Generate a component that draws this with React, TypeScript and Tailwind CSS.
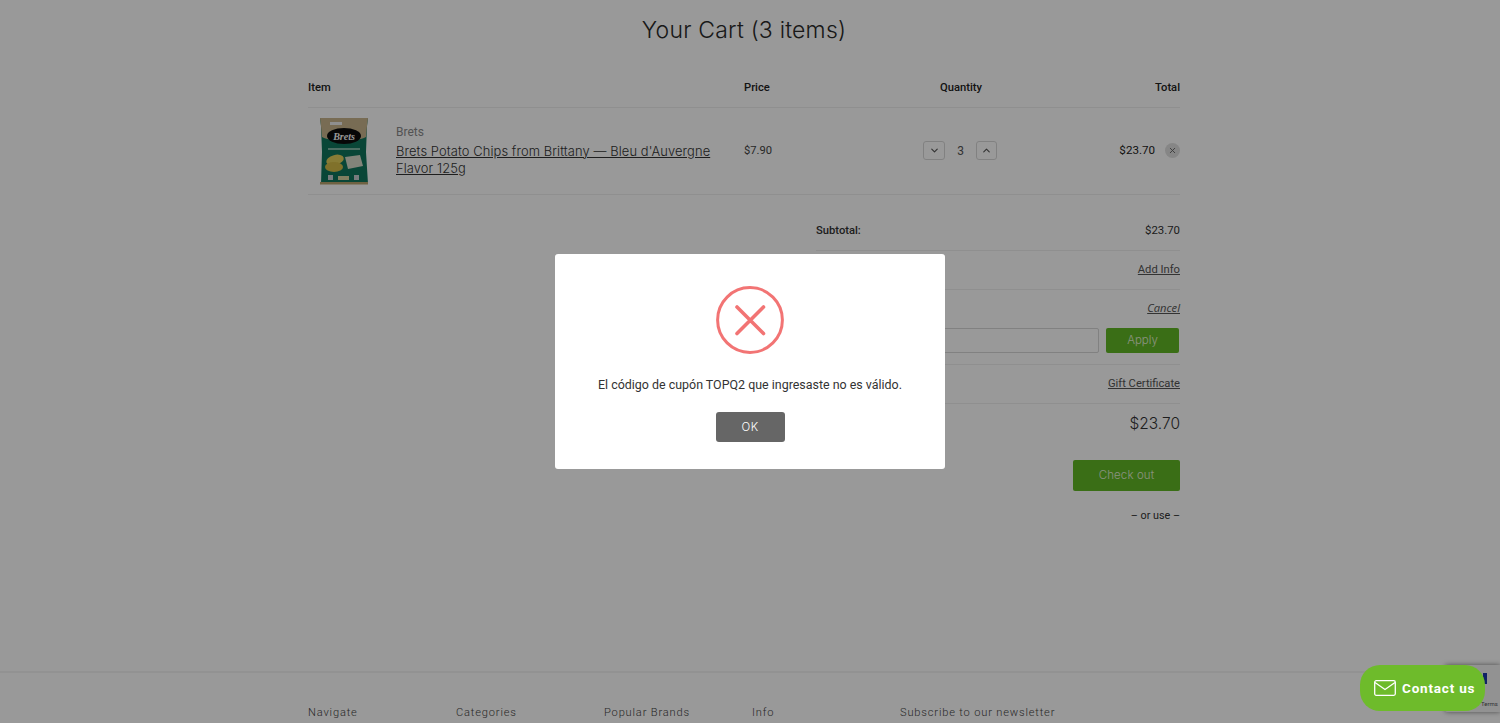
import { ChevronDown, ChevronUp, X } from 'lucide-react';

const footerCols = ['Navigate', 'Categories', 'Popular Brands', 'Info'];

function ChipsBag() {
  return (
    <svg width="48" height="68" viewBox="0 0 48 68" className="shrink-0">
      <path d="M0 1h48l-1 8-1 26 2 32-47 0 1-32L1 9z" fill="#10755c" />
      <path d="M0 1h48l-1 8-1 11C36 25 12 25 2 20L1 9z" fill="#c9b48c" />
      <path d="M10 5h12v3H10z" fill="#eee" />
      <ellipse cx="24" cy="19" rx="17" ry="8" fill="#0d0d0d" />
      <text x="24" y="22.5" textAnchor="middle" fontSize="10" fill="#fff" fontStyle="italic" fontWeight="700" fontFamily="Liberation Serif, serif">Brets</text>
      <rect x="8" y="31" width="32" height="2" fill="#7fb8a5" />
      <ellipse cx="15" cy="43" rx="9" ry="5" fill="#e3cf5a" transform="rotate(-15 15 43)" />
      <ellipse cx="14" cy="50" rx="9" ry="5" fill="#d5bd48" />
      <path d="M25 40l15-2 3 11-15 3z" fill="#d9dccb" />
      <path d="M0 65h48v2.5H0z" fill="#b9a36f" />
      <rect x="8" y="58" width="5" height="5" fill="#c7cdd0" />
      <rect x="18" y="59" width="11" height="4" fill="#d5d2a0" />
      <rect x="34" y="58" width="5" height="5" fill="#c7cdd0" />
    </svg>
  );
}

function SummaryRow({ className, children }: { className?: string; children: React.ReactNode }) {
  return <div className={`flex items-center border-b border-[#eeeeee] ${className}`}>{children}</div>;
}

export default function App() {
  return (
    <div className="relative h-[723px] w-[1500px] overflow-hidden bg-white font-['Roboto',sans-serif] text-[#1a1a1a]">
      <div className="flex h-full flex-col pr-3">
        <main className="mx-auto flex h-[671px] w-[872px] flex-col">
          <h1 className="pt-[13px] text-center font-['Inter',sans-serif] text-[23px] leading-[34px] font-light tracking-[0.2px] text-[#2b2b2b]">
            Your Cart (3 items)
          </h1>

          <div className="mt-[30px] flex h-[31px] items-start border-b border-[#eeeeee] text-[11.2px] leading-[22px] font-medium text-[#222]">
            <div className="w-[436px]">Item</div>
            <div className="w-[118px]">Price</div>
            <div className="w-[200px] pr-[2px] text-center">Quantity</div>
            <div className="flex-1 text-right">Total</div>
          </div>

          <div className="flex h-[87px] items-center border-b border-[#eeeeee] pb-[1px]">
            <div className="flex w-[88px] justify-start pl-[12px]">
              <ChipsBag />
            </div>
            <div className="w-[348px] pb-[2px]">
              <div className="text-[12px] leading-[18px] text-[#8a8a8a]">Brets</div>
              <a className="mt-[2px] block max-w-[335px] font-['Inter',sans-serif] text-[12.9px] leading-[17px] font-light tracking-[0.1px] text-[#333] underline">
                Brets Potato Chips from Brittany — Bleu d'Auvergne Flavor 125g
              </a>
            </div>
            <div className="w-[118px] pt-[1px] text-[11.2px] text-[#444]">$7.90</div>
            <div className="flex w-[200px] items-center justify-center gap-[10px] pr-[4px]">
              <button className="flex h-[19px] w-[22px] items-center justify-center rounded-[3px] border border-[#d8d8d8] text-[#555]">
                <ChevronDown size={11} strokeWidth={2.5} />
              </button>
              <span className="w-[11px] text-center text-[12px] text-[#555]">3</span>
              <button className="flex h-[19px] w-[21px] items-center justify-center rounded-[3px] border border-[#d8d8d8] text-[#555]">
                <ChevronUp size={11} strokeWidth={2.5} />
              </button>
            </div>
            <div className="flex flex-1 items-center justify-end gap-[10px]">
              <span className="text-[11.6px] text-[#222]">$23.70</span>
              <span className="flex h-[15px] w-[15px] items-center justify-center rounded-full bg-[#e0e0e0] text-[#666]">
                <X size={9} strokeWidth={2.5} />
              </span>
            </div>
          </div>

          <div className="ml-auto mt-[16px] w-[364px] text-[11.2px]">
            <SummaryRow className="h-[40px] justify-between pt-[1px]">
              <span className="font-medium text-[#333]">Subtotal:</span>
              <span className="text-[11.4px] text-[#333]">$23.70</span>
            </SummaryRow>
            <SummaryRow className="h-[39px] justify-end">
              <a className="text-[#555] underline">Add Info</a>
            </SummaryRow>
            <div className="border-b border-[#eeeeee] pb-[11px]">
              <div className="flex h-[38px] items-center justify-end pb-[1px]">
                <a className="font-['Open_Sans',sans-serif] text-[#555] italic underline">Cancel</a>
              </div>
              <div className="flex items-center gap-[7px]">
                <input className="h-[25px] w-[283px] rounded-[2px] border border-[#d8d8d8] bg-white" />
                <button className="h-[25px] w-[73px] rounded-[2px] bg-[#62b825] font-['Inter',sans-serif] text-[11.5px] font-light text-[#e4f3d7]">
                  Apply
                </button>
              </div>
            </div>
            <SummaryRow className="h-[39px] justify-end">
              <a className="text-[#555] underline">Gift Certificate</a>
            </SummaryRow>
            <div className="flex h-[39px] items-center justify-end pt-[1px]">
              <span className="font-['Inter',sans-serif] text-[15.5px] font-light text-[#333]">$23.70</span>
            </div>
            <div className="mt-[17px] flex justify-end">
              <button className="h-[31px] w-[107px] rounded-[2px] bg-[#62b825] pt-[1px] font-['Inter',sans-serif] text-[11.5px] font-light tracking-[0.1px] text-[#e4f3d7]">
                Check out
              </button>
            </div>
            <div className="mt-[17px] text-right text-[10.8px] text-[#333]">– or use –</div>
          </div>
        </main>

        <footer className="border-t-2 border-[#f4f4f4] pt-[31px]">
          <div className="mx-auto flex w-[872px] text-[11.1px] leading-[18px] font-light tracking-[0.83px] text-[#444]">
            {footerCols.map((name) => (
              <div key={name} className="w-[148px]">{name}</div>
            ))}
            <div>Subscribe to our newsletter</div>
          </div>
        </footer>
      </div>

      {/* reCAPTCHA badge */}
      <div className="absolute right-0 top-[665px] h-[47px] w-[55px] rounded-l-[2px] bg-[#f4f4f4] shadow-[0_0_5px_rgba(0,0,0,0.5)]">
        <span className="absolute left-[38px] top-[8px] h-[11px] w-[4px] bg-[#1c3aa9]" />
        <span className="absolute bottom-[5px] left-[36px] text-[6px] leading-[6px] text-[#555]">Terms</span>
      </div>

      {/* Modal overlay */}
      <div className="absolute inset-0 flex items-start justify-center bg-black/40">
        <div className="mt-[254px] flex h-[215px] w-[390px] flex-col items-center rounded-[3px] bg-white pt-[32px]">
          <svg width="68" height="68" viewBox="0 0 68 68" fill="none" stroke="#f27474" strokeWidth="3" strokeLinecap="round">
            <circle cx="34" cy="34" r="32.4" />
            <path d="M21 21l26.5 26.5M47.5 21L21 47.5" strokeWidth="3.6" />
          </svg>
          <p className="mt-[21px] text-[12.45px] leading-[20px] text-[#333]">
            El código de cupón TOPQ2 que ingresaste no es válido.
          </p>
          <button className="mt-[17px] h-[30px] w-[69px] rounded-[3px] bg-[#666666] pt-[2px] font-['Inter',sans-serif] text-[11.5px] font-light tracking-[0.4px] text-white">
            OK
          </button>
        </div>
      </div>

      <button className="absolute left-[1360px] top-[665px] flex h-[46px] w-[125px] items-center justify-start gap-[6px] rounded-[20px] bg-[#6ebb2b] pl-[14px] text-white">
        <svg width="22" height="16" viewBox="0 0 22 16" fill="none" stroke="currentColor" strokeWidth="1.3">
          <rect x="0.7" y="0.7" width="20.6" height="14.6" rx="1.5" />
          <path d="M1 2.5l10 7 10-7" />
        </svg>
        <span className="text-[13.5px] font-bold tracking-[0.8px]">Contact us</span>
      </button>
    </div>
  );
}
